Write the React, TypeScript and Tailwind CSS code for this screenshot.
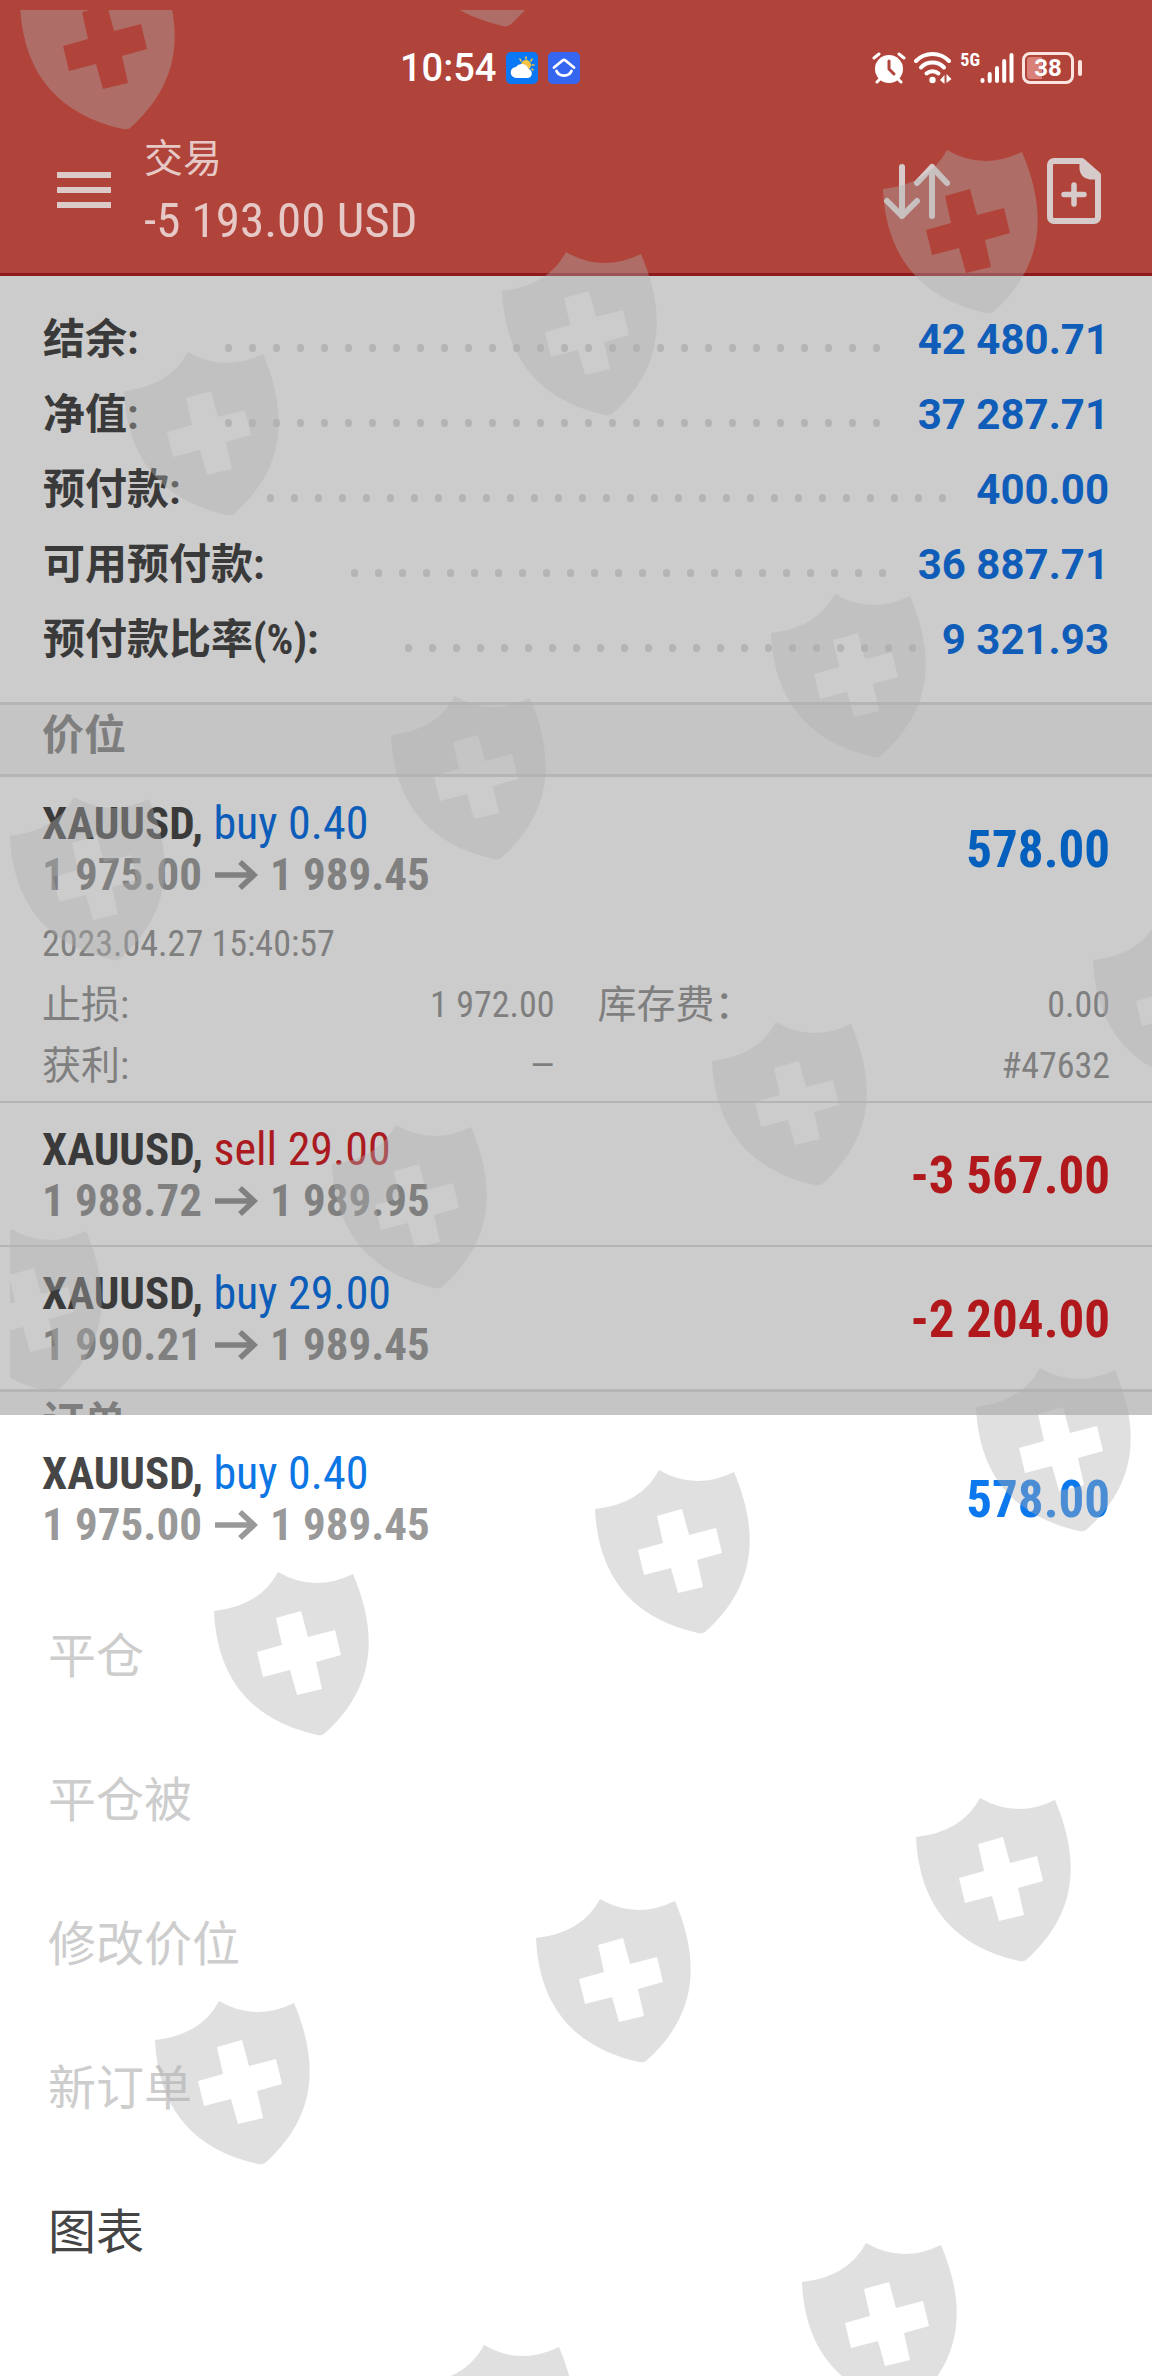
import React from 'react';

interface Position {
  symbol: string;
  side: 'buy' | 'sell';
  volume: string;
  open: string;
  current: string;
  profit: string;
}

const SUMMARY = [
  { label: '结余:', value: '42 480.71' },
  { label: '净值:', value: '37 287.71' },
  { label: '预付款:', value: '400.00' },
  { label: '可用预付款:', value: '36 887.71' },
  { label: '预付款比率(%):', value: '9 321.93' },
];

const POSITIONS: Position[] = [
  { symbol: 'XAUUSD', side: 'buy', volume: '0.40', open: '1 975.00', current: '1 989.45', profit: '578.00' },
  { symbol: 'XAUUSD', side: 'sell', volume: '29.00', open: '1 988.72', current: '1 989.95', profit: '-3 567.00' },
  { symbol: 'XAUUSD', side: 'buy', volume: '29.00', open: '1 990.21', current: '1 989.45', profit: '-2 204.00' },
];

const MENU = [
  { label: '平仓', enabled: false },
  { label: '平仓被', enabled: false },
  { label: '修改价位', enabled: false },
  { label: '新订单', enabled: false },
  { label: '图表', enabled: true },
];

const SHIELDS = [
  [20, 5], [400, -98], [883, 189], [502, 291], [124, 391], [771, 633], [391, 735],
  [10, 836], [1093, 960], [712, 1061], [332, 1164], [-53, 1268], [976, 1407], [595, 1509],
  [214, 1611], [916, 1837], [536, 1938], [155, 2040], [802, 2282], [420, 2384],
];

const ShieldLayer = () => (
  <div className="absolute top-[10px] left-[10px] right-0 bottom-0 overflow-hidden pointer-events-none">
    <svg className="w-full h-full" aria-hidden="true">
      <defs>
        <path
          id="shield"
          fillRule="evenodd"
          d="M0 0Q46 -5 64 -39Q100 -18 139 -37C163 20 164 75 110 123Q107 125 103 124C40 110 3 70 0 0Z
             M62 7L87 0L94 26L121 19L127 44L102 51L108 78L83 84L76 59L49 66L43 41L68 34Z"
        />
      </defs>
      <g fill="#afafaf" fillOpacity="0.39">
        {SHIELDS.map(([x, y]) => (
          <use key={`${x}-${y}`} href="#shield" x={x - 10} y={y - 10} />
        ))}
      </g>
    </svg>
  </div>
);

const StatusBar = () => (
  <div className="flex items-center justify-between pt-12 pb-10 pl-[400px] pr-[70px] text-white">
    <div className="flex items-center gap-[10px] h-10">
      <span className="font-['Roboto',sans-serif] font-medium text-[38px] leading-10">10:54</span>
      <svg width="32" height="32" viewBox="0 0 32 32" aria-hidden="true">
        <rect width="32" height="32" rx="5" fill="#0a78f5" />
        <circle cx="20" cy="13" r="5" fill="#f6c243" />
        <path d="M20 5v2M26 7l-1 2M28 13h-2M14 7l1 2M27 18l-1-1" stroke="#f6c243" strokeWidth="1.6" strokeLinecap="round" />
        <path d="M10.500 26a5.500 5.500 0 0 1-.6-11 7 7 0 0 1 12.400 1.700A4.800 4.800 0 0 1 22 26z" fill="#fff" />
      </svg>
      <svg width="32" height="32" viewBox="0 0 32 32" aria-hidden="true">
        <rect width="32" height="32" rx="5" fill="#3566f0" />
        <path d="M6 15.500L14.500 8.500Q16 7.300 17.500 8.500L26 15.500" fill="none" stroke="#fff" strokeWidth="2.800" strokeLinecap="round" />
        <path d="M8.500 19a8 7 0 0 0 15 0" fill="none" stroke="#fff" strokeWidth="2.800" strokeLinecap="round" />
      </svg>
    </div>
    <div className="flex items-center h-10">
      <svg width="34" height="32" viewBox="0 0 34 32" aria-hidden="true">
        <circle cx="17" cy="17" r="14" fill="#fff" />
        <path d="M2 6l5-4M32 6l-5-4M5 30l4-4M29 30l-4-4" stroke="#fff" strokeWidth="3" strokeLinecap="round" />
        <path d="M17 9v8l5 5" fill="none" stroke="#b0443a" strokeWidth="3" strokeLinecap="round" strokeLinejoin="round" />
      </svg>
      <svg className="ml-2" width="38" height="32" viewBox="0 0 38 32" aria-hidden="true">
        <g fill="none" stroke="#fff" strokeWidth="4" strokeLinecap="round">
          <path d="M2 9a23 23 0 0 1 33 0" />
          <path d="M7 15.500a16 16 0 0 1 23 0" />
          <path d="M12.500 21.500a9 9 0 0 1 12 0" />
        </g>
        <circle cx="18.500" cy="28" r="3.200" fill="#fff" />
        <path d="M30.500 23v9L26 28zM32.500 22v9l5-4z" fill="#fff" />
      </svg>
      <span className="ml-2 self-start mt-[2px] font-['Roboto_Condensed',sans-serif] font-bold text-[18px] leading-5">5G</span>
      <svg width="34" height="32" viewBox="0 0 34 32" aria-hidden="true">
        <g stroke="#fff" strokeWidth="4" strokeLinecap="round">
          <path d="M2.500 29v-1M9.700 29v-7M17 29V16M24.200 29V9M31.500 29V3" />
        </g>
      </svg>
      <span className="ml-2 flex items-center">
        <span className="flex items-center justify-center w-[52px] h-8 rounded-lg border-[3px] border-[#fbe4e0] bg-[linear-gradient(90deg,#d98078_36%,transparent_36%)] bg-origin-content bg-clip-content p-[2px] font-['Roboto',sans-serif] font-bold text-[24px] leading-6">
          38
        </span>
        <span className="ml-1 w-1 h-4 rounded-full bg-[#fbe4e0]" />
      </span>
    </div>
  </div>
);

const Header = () => (
  <header className="bg-[#b0443a] border-b-[3px] border-[#8f1a1c]">
    <StatusBar />
    <div className="flex items-center pl-[57px] pr-[50px] pb-[21px] text-[#e6c9c6]">
      <button aria-label="菜单" className="flex flex-col gap-[9px]">
        <span className="w-[54px] h-[6px] bg-[#dccac8]" />
        <span className="w-[54px] h-[6px] bg-[#dccac8]" />
        <span className="w-[54px] h-[6px] bg-[#dccac8]" />
      </button>
      <div className="ml-[33px] flex-1">
        <h1 className="text-[39px] leading-[62px]">交易</h1>
        <p className="text-[49px] leading-[62px]">-5 193.00 USD</p>
      </div>
      <button aria-label="排序">
        <svg width="68" height="60" viewBox="0 0 68 60" fill="none" stroke="#d6cbca" strokeWidth="6" strokeLinecap="round" strokeLinejoin="round">
          <path d="M20 7v49M5 41l15 15 15-15" />
          <path d="M50 56V7M35 23L50 7l15 16" />
        </svg>
      </button>
      <button aria-label="新订单" className="ml-24">
        <svg width="56" height="68" viewBox="0 0 56 68" fill="none" stroke="#d6cbca" strokeLinecap="round" strokeLinejoin="round">
          <path d="M8 5h28l16 14v42a4 4 0 0 1-4 4H8a4 4 0 0 1-4-4V9a4 4 0 0 1 4-4z" strokeWidth="6" />
          <path d="M35 5v8q1 8 9 9h8L38 6z" fill="#d6cbca" strokeWidth="3" />
          <path d="M28 29v19M18 38.500h20" strokeWidth="5.500" />
        </svg>
      </button>
    </div>
  </header>
);

const Dots = () => (
  <span className="flex-1 self-end mb-[25px] ml-[78px] mr-[15px] h-2 flex flex-wrap overflow-hidden" aria-hidden="true">
    {Array.from({ length: 40 }, (_, i) => (
      <span key={i} className="w-6 h-2 flex justify-center">
        <span className="w-[7px] h-2 rounded-full bg-[#b4b4b4]" />
      </span>
    ))}
  </span>
);

const Summary = () => (
  <dl className="px-[43px] pt-[26px] pb-[25px]">
    {SUMMARY.map((row) => (
      <div key={row.label} className="flex items-center h-[75px]">
        <dt className="text-[42px] leading-[75px] font-bold text-[#3a3a3a]">{row.label}</dt>
        <Dots />
        <dd className="font-['Roboto',sans-serif] text-[42px] leading-[75px] font-bold text-[#0f5db8]">{row.value}</dd>
      </div>
    ))}
  </dl>
);

const SectionTitle = ({ children }: { children: React.ReactNode }) => (
  <h2 className="h-[75px] px-[42px] border-y-[3px] border-[#b5b5b5] bg-[#c5c5c5] text-[42px] leading-[62px] font-bold text-[#7e7e7e]">
    {children}
  </h2>
);

const PositionHead = ({ position, active }: { position: Position; active?: boolean }) => {
  const { symbol, side, volume, open, current, profit } = position;
  const blue = active ? 'text-[#0b76e4]' : 'text-[#0c5db9]';
  const loss = profit.startsWith('-');

  return (
    <div className="flex items-center justify-between text-[45px] leading-[51px]">
      <div>
        <p>
          <span className={`font-bold ${active ? 'text-[#464646]' : 'text-[#3a3a3a]'}`}>{symbol},</span>{' '}
          <span className={`text-[46px] ${side === 'buy' ? blue : 'text-[#ab1a1f]'}`}>
            {side} {volume}
          </span>
        </p>
        <p className={`flex items-center gap-3 font-bold ${active ? 'text-[#999999]' : 'text-[#808080]'}`}>
          <span>{open}</span>
          <svg width="44" height="34" viewBox="0 0 44 34" fill="none" stroke="currentColor" strokeWidth="5.500" aria-hidden="true">
            <path d="M1 17h38M26 4l14 13-14 13" />
          </svg>
          <span>{current}</span>
        </p>
      </div>
      <span className={`text-[51px] font-bold ${loss ? 'text-[#b0181c]' : active ? 'text-[#0b78ee]' : 'text-[#0560bd]'}`}>
        {profit}
      </span>
    </div>
  );
};

const PositionDetails = () => (
  <div className="mt-[14px] mb-[-15px] text-[36px] leading-[61px] text-[#7f7f7f]">
    <p>2023.04.27 15:40:57</p>
    <dl className="grid grid-cols-2 gap-x-[43px]">
      <div className="flex justify-between">
        <dt className="text-[39px]">止损:</dt>
        <dd>1 972.00</dd>
      </div>
      <div className="flex justify-between">
        <dt className="text-[39px]">库存费：</dt>
        <dd>0.00</dd>
      </div>
      <div className="flex justify-between">
        <dt className="text-[39px]">获利:</dt>
        <dd>—</dd>
      </div>
      <div className="flex justify-end">
        <dd>#47632</dd>
      </div>
    </dl>
  </div>
);

const ActionSheet = () => (
  <section className="relative -mt-[49px] bg-white pb-[70px]">
    <div className="px-[42px] pt-[33px] pb-[35px]">
      <PositionHead position={POSITIONS[0]} active />
    </div>
    <ul>
      {MENU.map((item) => (
        <li key={item.label}>
          <button
            disabled={!item.enabled}
            className="block w-full h-36 px-12 text-left text-[48px] text-[#444444] disabled:text-[#cdcdcd]"
          >
            {item.label}
          </button>
        </li>
      ))}
    </ul>
  </section>
);

export default function App() {
  return (
    <div className="relative min-h-screen overflow-hidden bg-white font-['Roboto_Condensed','Noto_Sans_CJK_SC',sans-serif]">
      <Header />
      <main className="bg-[#cccccc]">
        <Summary />
        <SectionTitle>价位</SectionTitle>
        <ul>
          {POSITIONS.map((position, i) => (
            <li key={i} className="px-[42px] pt-[21px] pb-[19px] border-b-2 border-[#b5b5b5] last:border-b-0">
              <PositionHead position={position} />
              {i === 0 && <PositionDetails />}
            </li>
          ))}
        </ul>
        <SectionTitle>订单</SectionTitle>
      </main>
      <ActionSheet />
      <ShieldLayer />
    </div>
  );
}
